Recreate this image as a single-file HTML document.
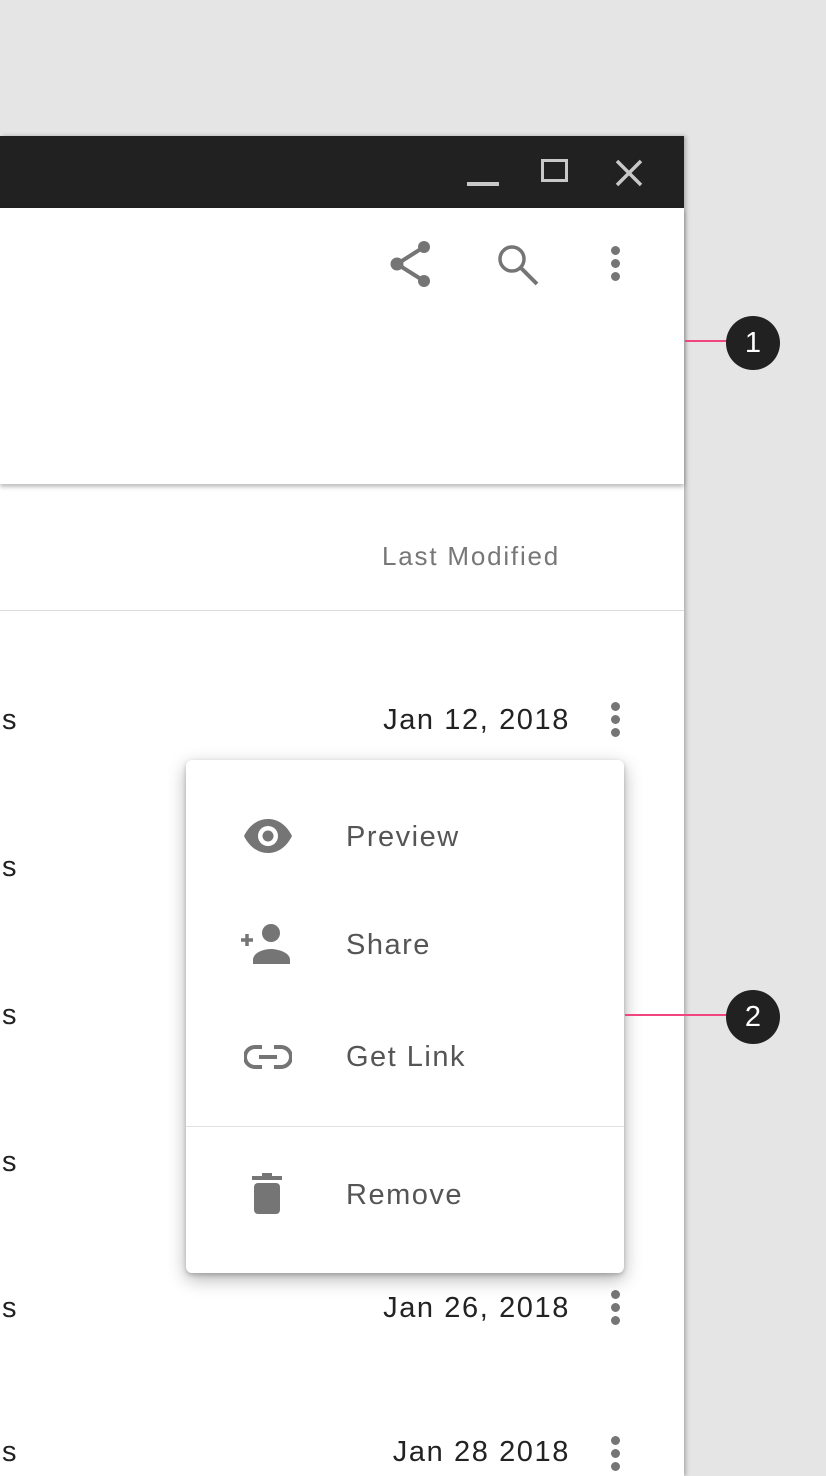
<!DOCTYPE html>
<html><head><style>
body{margin:0;width:826px;height:1464px;background:#e5e5e5;position:relative;overflow:hidden;font-family:"Liberation Sans",Arial,sans-serif}
.a{position:absolute}
.win{left:0;top:136px;width:684px;height:1340px;background:#fff;box-shadow:2px 0 4px rgba(0,0,0,.25)}
.bar{left:0;top:136px;width:684px;height:72px;background:#212121}
.app{left:0;top:208px;width:684px;height:276px;background:#fff;box-shadow:0 3px 4px rgba(0,0,0,.25)}
.date{font-size:29px;color:#222;right:256px;letter-spacing:1.6px}
.s{left:2px;font-size:29px;color:#222;letter-spacing:1.5px}
.dots{left:609px;width:12px}
.dots i{display:block;width:9px;height:9px;border-radius:50%;background:#757575;margin:0 auto 4px}
.menu{left:186px;top:760px;width:438px;height:513px;background:#fff;border-radius:6px;box-shadow:0 6px 18px rgba(0,0,0,.3),0 2px 5px rgba(0,0,0,.2)}
.mi{left:346px;font-size:29px;color:#555;letter-spacing:1.5px}
.cir{width:54px;height:54px;border-radius:50%;background:#212121;color:#fff;font-size:29px;text-align:center;line-height:54px;left:726px}
.ln{height:2px;background:#f0457f}
</style></head><body>
<div class="a win"></div>
<div class="a bar"></div>
<div class="a" style="left:467px;top:182px;width:32px;height:4px;background:#c8c8c8"></div>
<div class="a" style="left:541px;top:159px;width:27px;height:23px;border:3px solid #c8c8c8;box-sizing:border-box"></div>
<svg class="a" style="left:614px;top:158px" width="30" height="30"><path d="M3 3L27 27M27 3L3 27" stroke="#c8c8c8" stroke-width="3.5"/></svg>
<div class="a app"></div>
<svg class="a" style="left:386px;top:240px" width="48" height="48" viewBox="0 0 48 48"><g fill="#757575"><circle cx="38" cy="7" r="6"/><circle cx="11" cy="24" r="6.5"/><circle cx="38" cy="41" r="6"/></g><path d="M38 7L11 24L38 41" stroke="#757575" stroke-width="4" fill="none"/></svg>
<svg class="a" style="left:496px;top:242px" width="46" height="46"><circle cx="16" cy="17" r="12" stroke="#757575" stroke-width="3.5" fill="none"/><path d="M25 26L41 42" stroke="#757575" stroke-width="4"/></svg>
<div class="a dots" style="top:246px"><i></i><i></i><i></i></div>
<div class="a" style="left:382px;top:541px;font-size:26px;color:#777;letter-spacing:1.8px">Last Modified</div>
<div class="a" style="left:0;top:610px;width:684px;height:1px;background:#ddd"></div>
<div class="a s" style="top:704px">s</div><div class="a date" style="top:704px">Jan 12, 2018</div><div class="a dots" style="top:702px"><i></i><i></i><i></i></div>
<div class="a s" style="top:851px">s</div>
<div class="a s" style="top:999px">s</div>
<div class="a s" style="top:1146px">s</div>
<div class="a s" style="top:1292px">s</div><div class="a date" style="top:1292px">Jan 26, 2018</div><div class="a dots" style="top:1290px"><i></i><i></i><i></i></div>
<div class="a s" style="top:1436px">s</div><div class="a date" style="top:1436px">Jan 28 2018</div><div class="a dots" style="top:1436px"><i></i><i></i><i></i></div>
<div class="a menu"></div>
<svg class="a" style="left:242px;top:818px" width="52" height="36" viewBox="0 0 52 36"><path d="M2 18C8 6 17 1 26 1S44 6 50 18C44 30 35 35 26 35S8 30 2 18Z" fill="#757575"/><circle cx="26" cy="18" r="10" fill="#fff"/><circle cx="26" cy="18" r="5.5" fill="#757575"/></svg>
<svg class="a" style="left:238px;top:922px" width="54" height="42"><path d="M3 18H15M9 12V24" stroke="#757575" stroke-width="3.5"/><circle cx="33" cy="11" r="9" fill="#757575"/><path d="M15 42V38C15 30 27 27 33 27S52 30 52 38V42Z" fill="#757575"/></svg>
<svg class="a" style="left:244px;top:1043px" width="48" height="28"><path d="M18 4H11A10 10 0 0 0 11 24H18M30 4H37A10 10 0 0 1 37 24H30M15 14H33" stroke="#757575" stroke-width="4" fill="none"/></svg>
<svg class="a" style="left:250px;top:1172px" width="36" height="44"><path d="M2 4H32V8H2ZM12 1H22V4H12Z" fill="#757575"/><rect x="4" y="11" width="26" height="31" rx="4" fill="#757575"/></svg>
<div class="a mi" style="top:821px">Preview</div>
<div class="a mi" style="top:929px">Share</div>
<div class="a mi" style="top:1041px">Get Link</div>
<div class="a" style="left:186px;top:1126px;width:438px;height:1px;background:#e2e2e2"></div>
<div class="a mi" style="top:1179px">Remove</div>
<div class="a ln" style="left:685px;top:340px;width:45px"></div>
<div class="a cir" style="top:316px">1</div>
<div class="a ln" style="left:625px;top:1014px;width:105px"></div>
<div class="a cir" style="top:990px">2</div>
</body></html>
